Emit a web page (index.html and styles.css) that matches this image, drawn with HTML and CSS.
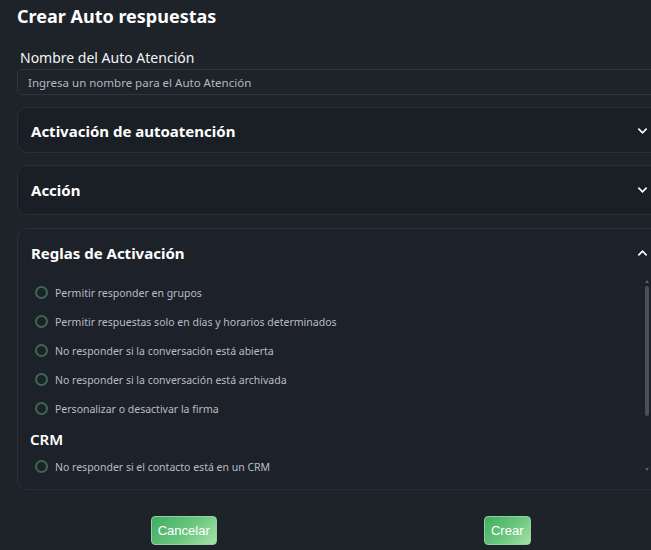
FILE: index.html
```html
<!DOCTYPE html>
<html lang="es">
<head>
    <meta charset="UTF-8">
    <title>Crear Auto respuestas</title>
    <link rel="stylesheet" href="styles.css">
</head>
<body>
    <div class="modal">
        <h1 class="titulo">Crear Auto respuestas</h1>

        <label class="etiqueta" for="nombre">Nombre del Auto Atención</label>
        <input id="nombre" class="campo" type="text" placeholder="Ingresa un nombre para el Auto Atención">

        <div class="panel">
            <div class="panel-header">
                <span>Activación de autoatención</span>
                <svg class="chevron" viewBox="0 0 12 8" width="11" height="8"><path d="M1.5 1.5 L6 6 L10.5 1.5" /></svg>
            </div>
        </div>

        <div class="panel">
            <div class="panel-header">
                <span>Acción</span>
                <svg class="chevron" viewBox="0 0 12 8" width="11" height="8"><path d="M1.5 1.5 L6 6 L10.5 1.5" /></svg>
            </div>
        </div>

        <div class="panel abierto">
            <div class="panel-header">
                <span>Reglas de Activación</span>
                <svg class="chevron" viewBox="0 0 12 8" width="11" height="8"><path d="M1.5 6.5 L6 2 L10.5 6.5" /></svg>
            </div>
            <div class="reglas-caja">
                <div class="reglas">
                    <label class="regla"><span class="radio"></span>Permitir responder en grupos</label>
                    <label class="regla"><span class="radio"></span>Permitir respuestas solo en días y horarios determinados</label>
                    <label class="regla"><span class="radio"></span>No responder si la conversación está abierta</label>
                    <label class="regla"><span class="radio"></span>No responder si la conversación está archivada</label>
                    <label class="regla"><span class="radio"></span>Personalizar o desactivar la firma</label>
                    <h3 class="subtitulo">CRM</h3>
                    <label class="regla"><span class="radio"></span>No responder si el contacto está en un CRM</label>
                </div>
                <!-- barra de desplazamiento -->
                <div class="barra">
                    <span class="flecha"></span>
                    <span class="pulgar"></span>
                    <span class="flecha abajo"></span>
                </div>
            </div>
        </div>

        <div class="acciones">
            <button class="boton">Cancelar</button>
            <button class="boton">Crear</button>
        </div>
    </div>
</body>
</html>
```

FILE: styles.css
```css
html, body {
    margin: 0;
    padding: 0;
    background: #1e232a;
    overflow: hidden;
}

body {
    font-family: "Noto Sans", "Open Sans", sans-serif;
    color: #ffffff;
}

.modal {
    width: 648px;
    padding: 4px 0 0 17px;
}

.titulo {
    margin: 0;
    font-size: 18px;
    font-weight: 700;
    line-height: 24px;
}

.etiqueta {
    display: block;
    margin: 20px 0 0 3px;
    font-size: 14px;
    line-height: 20px;
    color: #f2f3f4;
}

.campo {
    box-sizing: border-box;
    display: block;
    width: 100%;
    height: 26px;
    margin-top: 1px;
    padding: 0 10px;
    background: #1e232a;
    border: 1px solid #30363e;
    border-radius: 5px;
    font-family: "Noto Sans", sans-serif;
    font-size: 11.5px;
    color: #c4c8cd;
}

.campo::placeholder {
    color: #b4b9bf;
}

/* paneles tipo acordeon */
.panel {
    margin-top: 12px;
    background: #1a1e25;
    border: 1px solid #2a3038;
    border-radius: 10px;
}

.panel.abierto {
    margin-top: 13px;
    background: #1d2129;
    padding-bottom: 15px;
}

.panel-header {
    display: flex;
    align-items: center;
    justify-content: space-between;
    height: 48px;
    padding: 0 16px 0 13px;
    font-size: 15px;
    font-weight: 700;
}

.panel:first-of-type .panel-header {
    padding-top: 2px;
    height: 42px;
}

.chevron {
    fill: none;
    stroke: #ffffff;
    stroke-width: 1.8;
}

.reglas-caja {
    position: relative;
    margin: 1px 13px 0 12px;
}

.reglas {
    height: 196px;
    overflow: hidden;
}

.regla {
    display: flex;
    align-items: center;
    height: 29px;
    font-size: 10.5px;
    color: #b9bdc3;
}

.radio {
    box-sizing: border-box;
    width: 13px;
    height: 13px;
    margin: 0 7px 0 5px;
    border: 2px solid #3d6a4e;
    border-radius: 50%;
}

.subtitulo {
    margin: 0;
    padding-top: 5px;
    height: 24px;
    font-size: 15px;
    font-weight: 600;
    line-height: 22px;
}

.barra {
    position: absolute;
    top: 0;
    right: 0;
    bottom: 0;
    width: 8px;
    display: flex;
    flex-direction: column;
    align-items: center;
}

.flecha {
    width: 0;
    height: 0;
    margin: 2px 0;
    border-left: 2.5px solid transparent;
    border-right: 2.5px solid transparent;
    border-bottom: 3px solid #5a6069;
}

.flecha.abajo {
    margin-top: auto;
    margin-bottom: 3px;
    border-bottom: none;
    border-top: 3px solid #5a6069;
}

.pulgar {
    width: 4px;
    height: 130px;
    margin-top: 1px;
    border-radius: 2px;
    background: #4a5059;
}

.acciones {
    display: grid;
    grid-template-columns: 1fr 1fr;
    justify-items: center;
    margin: 26px -4px 0 0;
    padding-left: 5px;
}

.boton {
    height: 29px;
    padding: 0 6px;
    border: 1px solid #8fd39a;
    border-radius: 4px;
    background: linear-gradient(135deg, #3fae62 0%, #6cc680 55%, #a8e2a8 100%);
    color: #ffffff;
    font-family: "Liberation Sans", Arial, sans-serif;
    font-size: 13px;
}
```
